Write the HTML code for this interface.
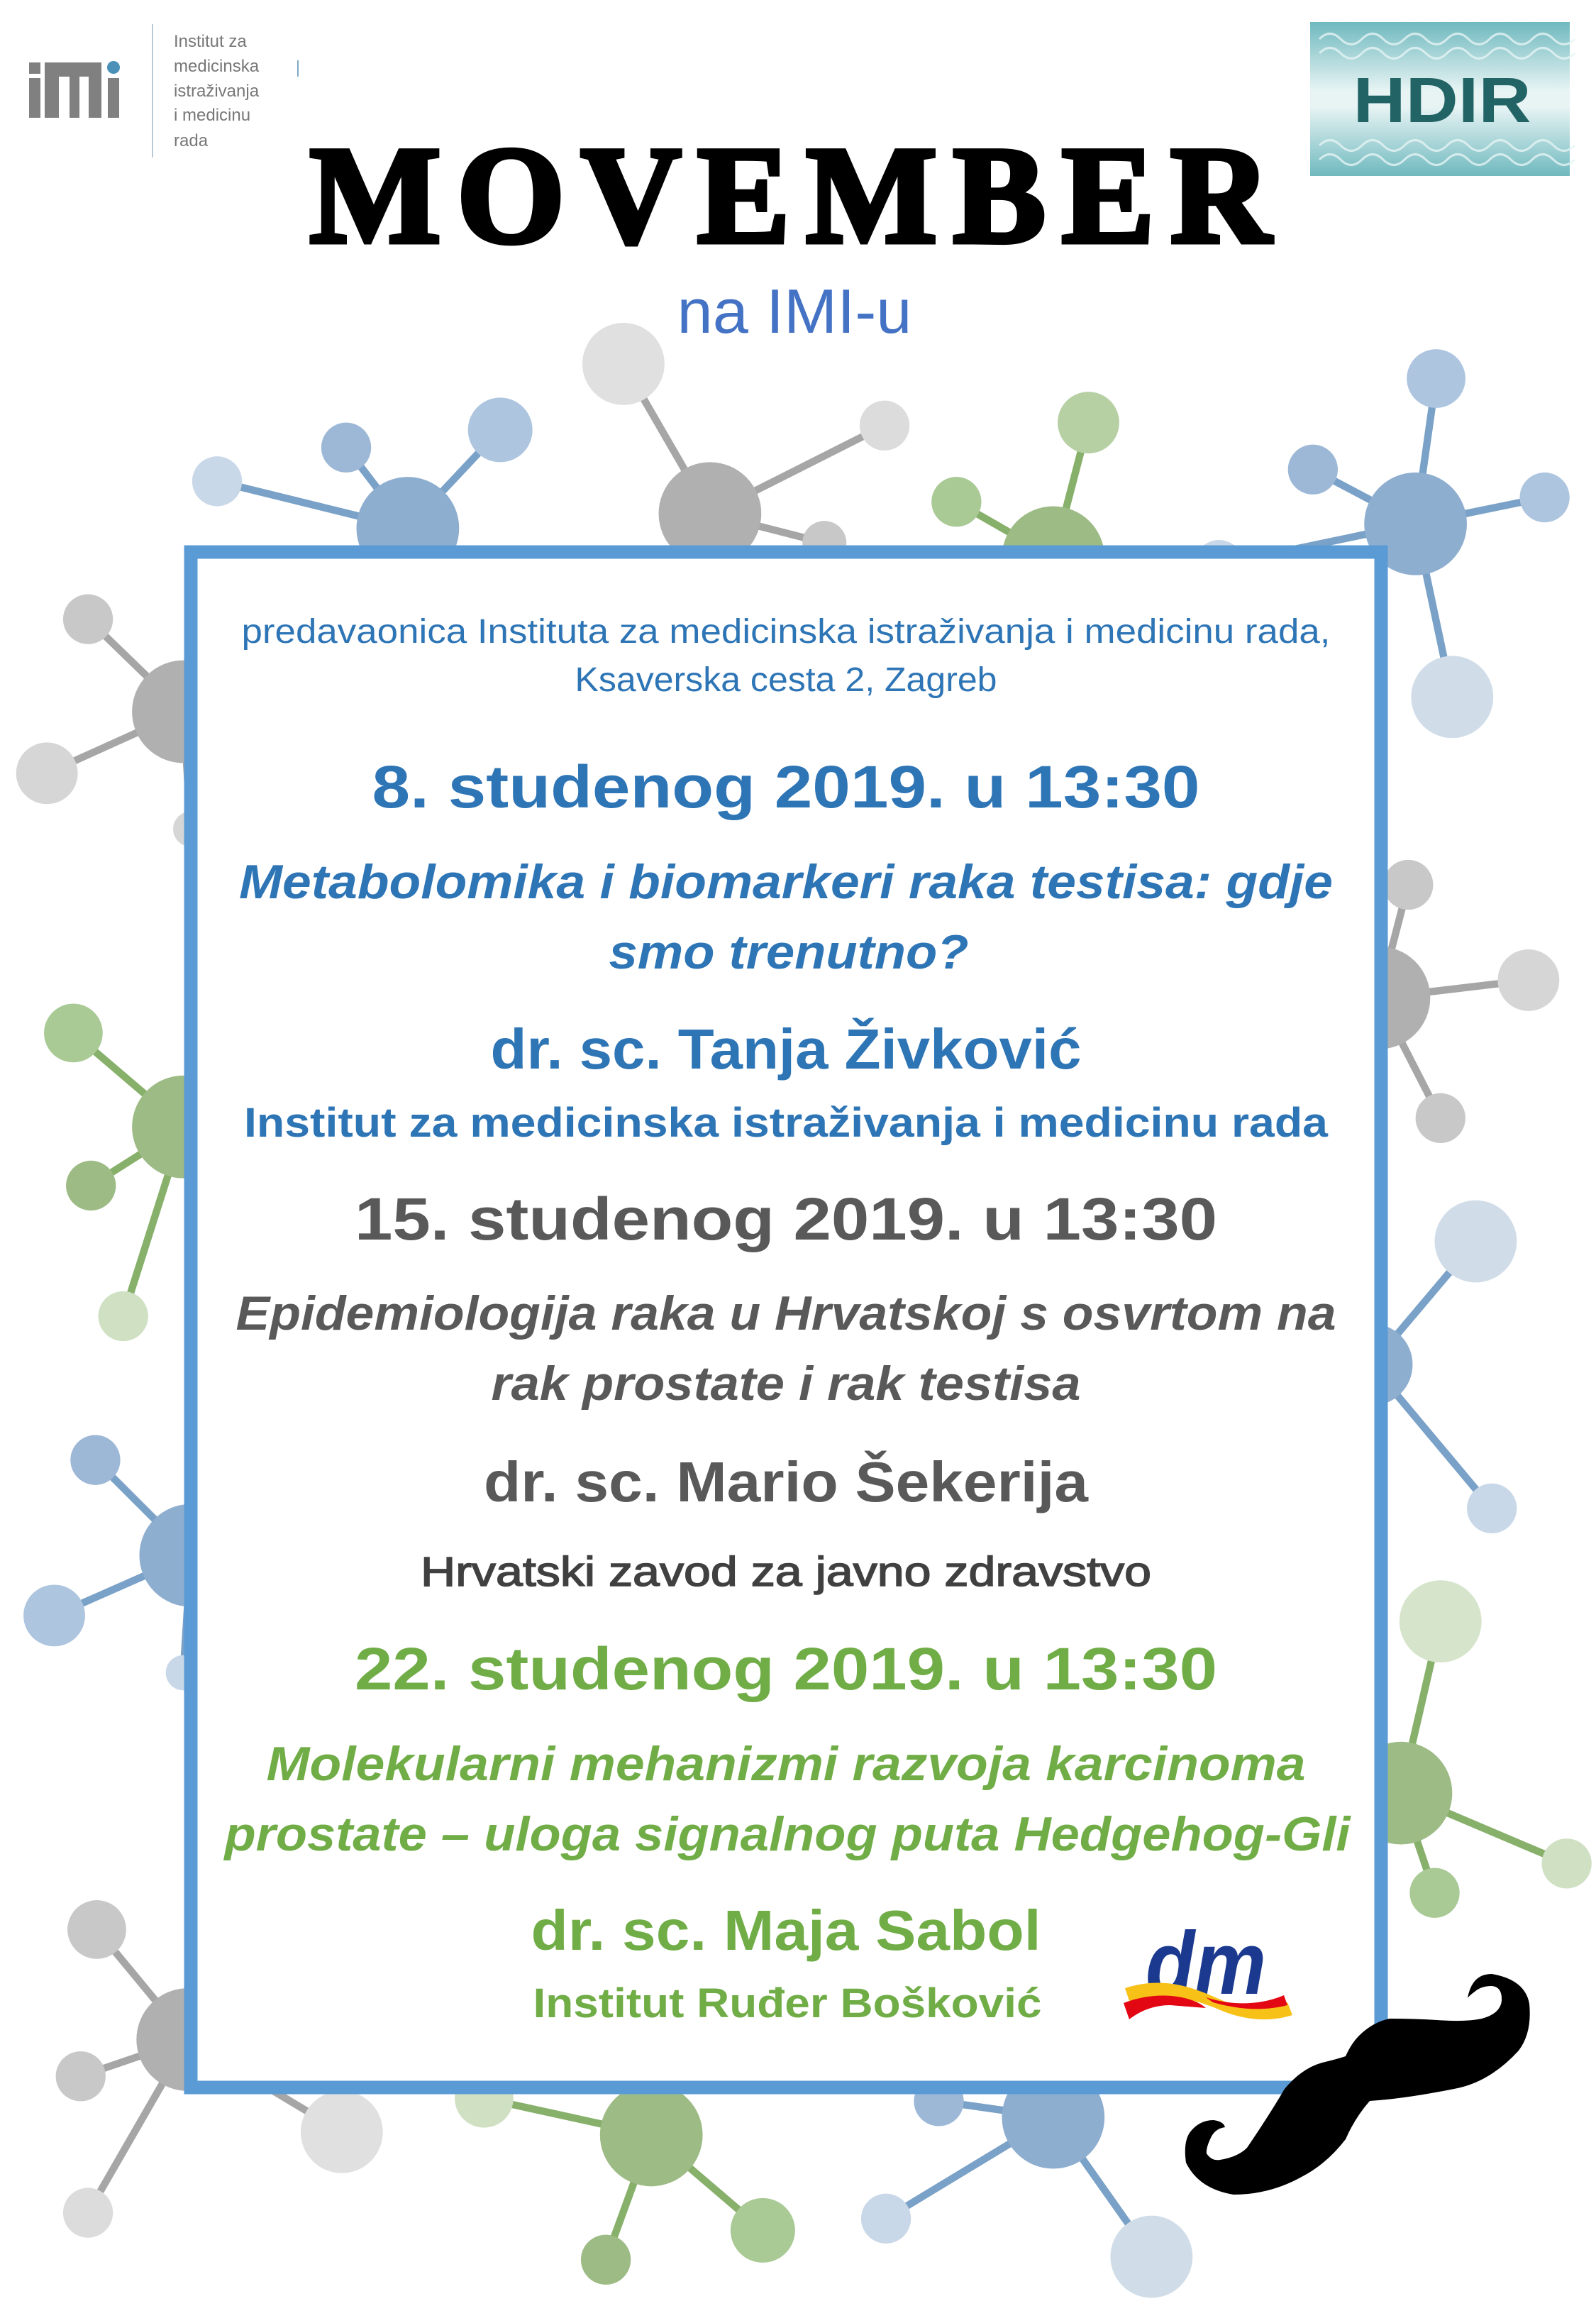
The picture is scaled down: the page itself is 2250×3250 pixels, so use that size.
<!DOCTYPE html>
<html><head><meta charset="utf-8"><style>
html,body{margin:0;padding:0;background:#fff;}
svg{display:block;}
</style></head><body>
<svg width="2250" height="3250" viewBox="0 0 2250 3250" xmlns="http://www.w3.org/2000/svg">
<defs>
<linearGradient id="hd" x1="0" y1="0" x2="0" y2="1">
<stop offset="0" stop-color="#6fb9bf"/><stop offset="0.45" stop-color="#e8f4f4"/><stop offset="0.55" stop-color="#e8f4f4"/><stop offset="1" stop-color="#6fb9bf"/>
</linearGradient>
</defs>
<rect width="2250" height="3250" fill="#fff"/>
<g transform="scale(2.068)">
<g stroke-width="5" stroke-linecap="round">
<g stroke="#7aa1c7">
<line x1="148" y1="328" x2="278" y2="360"/><line x1="236" y1="305" x2="278" y2="360"/><line x1="341" y1="293" x2="278" y2="360"/>
<line x1="979" y1="258" x2="965" y2="357"/><line x1="895" y1="320" x2="965" y2="357"/><line x1="1053" y1="339" x2="965" y2="357"/><line x1="831" y1="385" x2="965" y2="357"/><line x1="990" y1="475" x2="965" y2="357"/>
<line x1="65" y1="995" x2="130" y2="1060"/><line x1="37" y1="1101" x2="130" y2="1060"/><line x1="125" y1="1140" x2="130" y2="1060"/>
<line x1="1006" y1="846" x2="935" y2="930"/><line x1="1017" y1="1028" x2="935" y2="930"/>
<line x1="640" y1="1432" x2="718" y2="1443"/><line x1="604" y1="1512" x2="718" y2="1443"/><line x1="785" y1="1538" x2="718" y2="1443"/>
</g>
<g stroke="#a6a6a6">
<line x1="425" y1="248" x2="484" y2="350"/><line x1="603" y1="290" x2="484" y2="350"/><line x1="562" y1="370" x2="484" y2="350"/>
<line x1="60" y1="422" x2="125" y2="485"/><line x1="32" y1="527" x2="125" y2="485"/><line x1="130" y1="565" x2="125" y2="485"/>
<line x1="66" y1="1315" x2="128" y2="1390"/><line x1="174" y1="1313" x2="128" y2="1390"/><line x1="55" y1="1415" x2="128" y2="1390"/><line x1="233" y1="1453" x2="128" y2="1390"/><line x1="60" y1="1508" x2="128" y2="1390"/>
<line x1="960" y1="603" x2="940" y2="680"/><line x1="1042" y1="668" x2="940" y2="680"/><line x1="982" y1="762" x2="940" y2="680"/>
</g>
<g stroke="#87b06b">
<line x1="742" y1="288" x2="718" y2="380"/><line x1="652" y1="342" x2="718" y2="380"/>
<line x1="50" y1="704" x2="125" y2="768"/><line x1="62" y1="808" x2="125" y2="768"/><line x1="84" y1="897" x2="125" y2="768"/>
<line x1="982" y1="1105" x2="955" y2="1222"/><line x1="1068" y1="1270" x2="955" y2="1222"/><line x1="978" y1="1290" x2="955" y2="1222"/>
<line x1="330" y1="1430" x2="444" y2="1455"/><line x1="520" y1="1520" x2="444" y2="1455"/><line x1="413" y1="1540" x2="444" y2="1455"/>
</g>
</g>
<g>
<circle cx="278" cy="360" r="35" fill="#8eaed0"/><circle cx="148" cy="328" r="17" fill="#c9d8e8"/><circle cx="236" cy="305" r="17" fill="#9db8d6"/><circle cx="341" cy="293" r="22" fill="#adc5df"/>
<circle cx="484" cy="350" r="35" fill="#b0b0b0"/><circle cx="425" cy="248" r="28" fill="#e0e0e0"/><circle cx="603" cy="290" r="17" fill="#dcdcdc"/><circle cx="562" cy="370" r="15" fill="#c8c8c8"/>
<circle cx="718" cy="380" r="35" fill="#9dbb85"/><circle cx="742" cy="288" r="21" fill="#b6d0a3"/><circle cx="652" cy="342" r="17" fill="#a9c995"/>
<circle cx="965" cy="357" r="35" fill="#8eaed0"/><circle cx="979" cy="258" r="20" fill="#adc5df"/><circle cx="895" cy="320" r="17" fill="#9db8d6"/><circle cx="1053" cy="339" r="17" fill="#adc5df"/><circle cx="831" cy="385" r="17" fill="#c9d8e8"/><circle cx="990" cy="475" r="28" fill="#d0dde9"/>
<circle cx="125" cy="485" r="35" fill="#b0b0b0"/><circle cx="60" cy="422" r="17" fill="#c8c8c8"/><circle cx="32" cy="527" r="21" fill="#d6d6d6"/><circle cx="130" cy="565" r="12" fill="#d6d6d6"/>
<circle cx="125" cy="768" r="35" fill="#9dbb85"/><circle cx="50" cy="704" r="20" fill="#a9c995"/><circle cx="62" cy="808" r="17" fill="#9dbb85"/><circle cx="84" cy="897" r="17" fill="#cfe0c3"/>
<circle cx="130" cy="1060" r="35" fill="#8eaed0"/><circle cx="65" cy="995" r="17" fill="#9db8d6"/><circle cx="37" cy="1101" r="21" fill="#adc5df"/><circle cx="125" cy="1140" r="12" fill="#c9d8e8"/>
<circle cx="128" cy="1390" r="35" fill="#b0b0b0"/><circle cx="66" cy="1315" r="20" fill="#c8c8c8"/><circle cx="174" cy="1313" r="17" fill="#c8c8c8"/><circle cx="55" cy="1415" r="17" fill="#c8c8c8"/><circle cx="233" cy="1453" r="28" fill="#e0e0e0"/><circle cx="60" cy="1508" r="17" fill="#dcdcdc"/>
<circle cx="940" cy="680" r="35" fill="#b0b0b0"/><circle cx="960" cy="603" r="17" fill="#c8c8c8"/><circle cx="1042" cy="668" r="21" fill="#d6d6d6"/><circle cx="982" cy="762" r="17" fill="#c8c8c8"/>
<circle cx="935" cy="930" r="28" fill="#8eaed0"/><circle cx="1006" cy="846" r="28" fill="#d0dde9"/><circle cx="1017" cy="1028" r="17" fill="#c9d8e8"/>
<circle cx="955" cy="1222" r="35" fill="#9dbb85"/><circle cx="982" cy="1105" r="28" fill="#d5e4ca"/><circle cx="1068" cy="1270" r="17" fill="#cfe0c3"/><circle cx="978" cy="1290" r="17" fill="#a9c995"/>
<circle cx="444" cy="1455" r="35" fill="#9dbb85"/><circle cx="330" cy="1430" r="20" fill="#cfe0c3"/><circle cx="520" cy="1520" r="22" fill="#a9c995"/><circle cx="413" cy="1540" r="17" fill="#9dbb85"/>
<circle cx="718" cy="1443" r="35" fill="#8eaed0"/><circle cx="640" cy="1432" r="17" fill="#9db8d6"/><circle cx="604" cy="1512" r="17" fill="#c9d8e8"/><circle cx="785" cy="1538" r="28" fill="#d0dde9"/>
</g>
</g>
<rect x="269" y="778" width="1678" height="2164" fill="#fff" stroke="#5b9bd5" stroke-width="19"/>

<g fill="#808080">
<rect x="41" y="88" width="16" height="16"/><rect x="41" y="110" width="16" height="56"/>
<rect x="63" y="88" width="20" height="78"/><rect x="63" y="88" width="80" height="20"/><rect x="98" y="88" width="14" height="78"/><rect x="125" y="88" width="18" height="78"/>
<rect x="152" y="110" width="16" height="56"/>
</g>
<circle cx="160" cy="95" r="9" fill="#4a90b8"/>
<line x1="215" y1="34" x2="215" y2="222" stroke="#b9c9d6" stroke-width="2"/>
<line x1="420" y1="85" x2="420" y2="108" stroke="#7fa9c8" stroke-width="2"/>
<g font-family="Liberation Sans, sans-serif" font-size="24" fill="#777">
<text x="245" y="66">Institut za</text><text x="245" y="101">medicinska</text><text x="245" y="136">istraživanja</text><text x="245" y="170">i medicinu</text><text x="245" y="206">rada</text>
</g>

<rect x="1847" y="31" width="366" height="217" fill="url(#hd)"/>
<g fill="none" stroke="#e6f4f4" stroke-width="3" opacity="0.8">
<path d="M1860 55 q15 -15 30 0 t30 0 t30 0 t30 0 t30 0 t30 0 t30 0 t30 0 t30 0 t30 0 t30 0 t30 0"/>
<path d="M1860 75 q15 -15 30 0 t30 0 t30 0 t30 0 t30 0 t30 0 t30 0 t30 0 t30 0 t30 0 t30 0 t30 0"/>
<path d="M1860 205 q15 -15 30 0 t30 0 t30 0 t30 0 t30 0 t30 0 t30 0 t30 0 t30 0 t30 0 t30 0 t30 0"/>
<path d="M1860 225 q15 -15 30 0 t30 0 t30 0 t30 0 t30 0 t30 0 t30 0 t30 0 t30 0 t30 0 t30 0 t30 0"/>
</g>
<text x="2033" y="172" text-anchor="middle" font-family="Liberation Sans, sans-serif" font-weight="bold" font-size="90" fill="#226466" textLength="251" lengthAdjust="spacingAndGlyphs">HDIR</text>

<text x="1114" y="341" text-anchor="middle" font-family="Liberation Serif, serif" font-weight="bold" font-size="196" fill="#000" stroke="#000" stroke-width="7" textLength="1355" lengthAdjust="spacing">MOVEMBER</text>
<text x="1120" y="469" text-anchor="middle" font-family="Liberation Sans, sans-serif" font-size="88" fill="#4472c4" textLength="331" lengthAdjust="spacingAndGlyphs">na IMI-u</text>

<g font-family="Liberation Sans, sans-serif" text-anchor="middle">
<text x="1108" y="906" font-size="48" fill="#2e75b6" textLength="1535" lengthAdjust="spacingAndGlyphs">predavaonica Instituta za medicinska istraživanja i medicinu rada,</text>
<text x="1108" y="974" font-size="48" fill="#2e75b6" textLength="595" lengthAdjust="spacingAndGlyphs">Ksaverska cesta 2, Zagreb</text>
<text x="1108" y="1138" font-size="84" font-weight="bold" fill="#2e75b6" textLength="1167" lengthAdjust="spacingAndGlyphs">8. studenog 2019. u 13:30</text>
<text x="1108" y="1266" font-size="68" font-weight="bold" font-style="italic" fill="#2e75b6" textLength="1542" lengthAdjust="spacingAndGlyphs">Metabolomika i biomarkeri raka testisa: gdje</text>
<text x="1112" y="1365" font-size="68" font-weight="bold" font-style="italic" fill="#2e75b6" textLength="507" lengthAdjust="spacingAndGlyphs">smo trenutno?</text>
<text x="1108" y="1506" font-size="80" font-weight="bold" fill="#2e75b6" textLength="833" lengthAdjust="spacingAndGlyphs">dr. sc. Tanja Živković</text>
<text x="1108" y="1602" font-size="58" font-weight="bold" fill="#2e75b6" textLength="1528" lengthAdjust="spacingAndGlyphs">Institut za medicinska istraživanja i medicinu rada</text>

<text x="1108" y="1747" font-size="84" font-weight="bold" fill="#595959" textLength="1216" lengthAdjust="spacingAndGlyphs">15. studenog 2019. u 13:30</text>
<text x="1108" y="1874" font-size="68" font-weight="bold" font-style="italic" fill="#595959" textLength="1551" lengthAdjust="spacingAndGlyphs">Epidemiologija raka u Hrvatskoj s osvrtom na</text>
<text x="1108" y="1973" font-size="68" font-weight="bold" font-style="italic" fill="#595959" textLength="831" lengthAdjust="spacingAndGlyphs">rak prostate i rak testisa</text>
<text x="1108" y="2116" font-size="80" font-weight="bold" fill="#595959" textLength="852" lengthAdjust="spacingAndGlyphs">dr. sc. Mario Šekerija</text>
<text x="1108" y="2235" font-size="58" fill="#404040" stroke="#404040" stroke-width="1.5" textLength="1030" lengthAdjust="spacingAndGlyphs">Hrvatski zavod za javno zdravstvo</text>

<text x="1108" y="2381" font-size="84" font-weight="bold" fill="#70ad47" textLength="1216" lengthAdjust="spacingAndGlyphs">22. studenog 2019. u 13:30</text>
<text x="1108" y="2509" font-size="68" font-weight="bold" font-style="italic" fill="#70ad47" textLength="1465" lengthAdjust="spacingAndGlyphs">Molekularni mehanizmi razvoja karcinoma</text>
<text x="1110" y="2608" font-size="68" font-weight="bold" font-style="italic" fill="#70ad47" textLength="1587" lengthAdjust="spacingAndGlyphs">prostate – uloga signalnog puta Hedgehog-Gli</text>
<text x="1108" y="2748" font-size="80" font-weight="bold" fill="#70ad47" textLength="719" lengthAdjust="spacingAndGlyphs">dr. sc. Maja Sabol</text>
<text x="1110" y="2843" font-size="58" font-weight="bold" fill="#70ad47" textLength="717" lengthAdjust="spacingAndGlyphs">Institut Ruđer Bošković</text>
</g>

<text x="1700" y="2810" text-anchor="middle" font-family="Liberation Sans, sans-serif" font-weight="bold" font-style="italic" font-size="125" fill="#1b3a8f" textLength="170" lengthAdjust="spacingAndGlyphs">dm</text>
<path d="M1586 2802 C1640 2785 1680 2800 1720 2818 C1760 2835 1790 2835 1815 2822 L1822 2840 C1790 2850 1755 2848 1718 2832 C1680 2815 1640 2810 1592 2820 Z" fill="#f7c118"/>
<path d="M1584 2823 C1630 2805 1680 2812 1700 2830 L1650 2826 C1630 2826 1610 2832 1592 2846 Z" fill="#e30613"/>
<path d="M1700 2815 C1740 2828 1780 2825 1810 2812 L1815 2826 C1780 2835 1745 2832 1710 2822 Z" fill="#e30613"/>

<path d="M2069 2816 Q2075 2782 2103 2782 Q2150 2790 2156 2824 Q2160 2865 2141 2890 Q2100 2935 2050 2944 Q1980 2958 1931 2961 Q1910 2985 1897 3015 Q1870 3050 1835 3068 Q1790 3093 1739 3093 Q1690 3085 1672 3048 Q1668 3020 1677 3006 Q1690 2988 1711 2988 Q1725 2990 1727 2998 Q1712 3000 1706 3015 Q1700 3028 1701 3035 Q1708 3046 1720 3044 Q1745 3040 1758 3027 Q1790 2980 1811 2944 Q1835 2915 1864 2907 Q1885 2902 1897 2898 Q1905 2880 1916 2869 Q1935 2850 1959 2845 Q1995 2845 2026 2847 Q2065 2850 2089 2845 Q2115 2838 2117 2820 Q2118 2800 2103 2799 Q2088 2799 2079 2807 Q2072 2812 2069 2816 Z" fill="#000"/>
</svg>
</body></html>
